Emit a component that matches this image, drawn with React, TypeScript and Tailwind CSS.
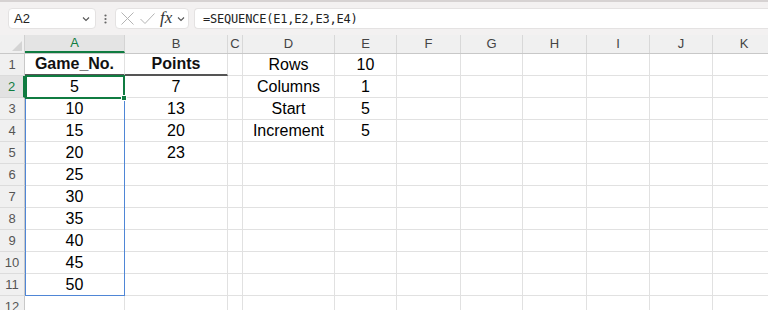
import React from 'react';

const cols = [
  { k: 'A', w: 'w-[100px]' },
  { k: 'B', w: 'w-[103px]' },
  { k: 'C', w: 'w-[15px]' },
  { k: 'D', w: 'w-[92px]' },
  { k: 'E', w: 'w-[62px]' },
  { k: 'F', w: 'w-[64px]' },
  { k: 'G', w: 'w-[62px]' },
  { k: 'H', w: 'w-[64px]' },
  { k: 'I', w: 'w-[63px]' },
  { k: 'J', w: 'w-[63px]' },
  { k: 'K', w: 'w-[63px]' },
];

const data: Record<number, Record<string, string>> = {
  1: { A: 'Game_No.', B: 'Points', D: 'Rows', E: '10' },
  2: { A: '5', B: '7', D: 'Columns', E: '1' },
  3: { A: '10', B: '13', D: 'Start', E: '5' },
  4: { A: '15', B: '20', D: 'Increment', E: '5' },
  5: { A: '20', B: '23' },
  6: { A: '25' },
  7: { A: '30' },
  8: { A: '35' },
  9: { A: '40' },
  10: { A: '45' },
  11: { A: '50' },
  12: {},
};

const Chevron = () => (
  <svg width="10" height="10" viewBox="0 0 10 10" fill="none" stroke="#555" strokeWidth="1.1">
    <path d="M2 3.5 L5 6.5 L8 3.5" />
  </svg>
);

const App: React.FC = () => {
  return (
    <div className="w-[768px] h-[310px] overflow-hidden bg-white font-['Liberation_Sans',Arial,sans-serif]">
      {/* formula bar */}
      <div className="h-[35px] bg-[#f3f1f1] border-t-2 border-[#d6d2d2] flex items-start pt-[6px] pl-[8px]">
        <div className="w-[88px] h-[21px] bg-white rounded-[4px] border border-[#e4e2e2] flex items-center justify-between pl-[5px] pr-[4px]">
          <span className="text-[13px] text-[#222]">A2</span>
          <Chevron />
        </div>
        <div className="w-[19px] h-[21px] flex items-center justify-center">
          <svg width="3" height="12" viewBox="0 0 3 12" fill="#666">
            <circle cx="1.5" cy="2.5" r="1.1" />
            <circle cx="1.5" cy="6" r="1.1" />
            <circle cx="1.5" cy="9.5" r="1.1" />
          </svg>
        </div>
        <div className="w-[74px] h-[21px] bg-white rounded-[4px] border border-[#e4e2e2] flex items-center pl-[4px] gap-[4px]">
          <svg width="15" height="15" viewBox="0 0 15 15" fill="none" stroke="#b4b4b4" strokeWidth="1">
            <path d="M1.5 1.5 L13.5 13.5 M13.5 1.5 L1.5 13.5" />
          </svg>
          <svg width="17" height="15" viewBox="0 0 17 15" fill="none" stroke="#b4b4b4" strokeWidth="1">
            <path d="M1.5 8 L6 12.5 L15.5 2.5" />
          </svg>
          <span className="text-[17px] italic text-[#333] font-['Liberation_Serif',serif] leading-none -mt-[2px]">fx</span>
          <Chevron />
        </div>
        <div className="ml-[5px] flex-1 h-[21px] bg-white rounded-l-[4px] border border-r-0 border-[#e4e2e2] flex items-center pl-[8px]">
          <span className="text-[12px] text-[#222] font-['DejaVu_Sans_Mono',monospace] tracking-[-0.2px]">=SEQUENCE(E1,E2,E3,E4)</span>
        </div>
      </div>

      {/* column headers */}
      <div className="flex h-[19px] bg-[#f0f0f0] border-b border-[#c8c8c8]">
        <div className="w-[25px] shrink-0 border-r border-[#d0d0d0] flex items-end justify-end pr-[2px] pb-[2px]">
          <svg width="10" height="10" viewBox="0 0 10 10">
            <path d="M10 0 L10 10 L0 10 Z" fill="#d4d4d4" />
          </svg>
        </div>
        {cols.map((c) => (
          <div
            key={c.k}
            className={
              c.k === 'A'
                ? `${c.w} shrink-0 border-r border-[#d4d4d4] bg-[#e4e4e4] border-b-2 border-b-[#107c41] text-[#107c41] text-[13px] flex items-center justify-center`
                : `${c.w} shrink-0 border-r border-[#d8d8d8] text-[#444] text-[13px] flex items-center justify-center`
            }
          >
            {c.k}
          </div>
        ))}
      </div>

      {/* grid */}
      <div className="relative">
        {Object.keys(data).map((rk) => {
          const r = Number(rk);
          const row = data[r];
          return (
            <div key={r} className="flex h-[22px]">
              <div
                className={
                  r === 2
                    ? 'w-[25px] shrink-0 bg-[#e2e2e2] border-r-2 border-[#107c41] border-b border-b-[#d8d8d8] text-[13px] text-[#107c41] flex items-center justify-center'
                    : 'w-[25px] shrink-0 bg-[#f0f0f0] border-r border-[#c8c8c8] border-b border-b-[#dcdcdc] text-[13px] text-[#555] flex items-center justify-center'
                }
              >
                {r}
              </div>
              {cols.map((c) => {
                const v = row[c.k];
                const head = r === 1 && (c.k === 'A' || c.k === 'B');
                return (
                  <div
                    key={c.k}
                    className={
                      head
                        ? `${c.w} shrink-0 border-r border-[#e1e1e1] border-b-2 border-b-[#555] text-[16px] font-bold text-[#111] flex items-center justify-center`
                        : `${c.w} shrink-0 border-r border-b border-[#e1e1e1] text-[16px] text-black flex items-center justify-center`
                    }
                  >
                    {v}
                  </div>
                );
              })}
            </div>
          );
        })}

        {/* spill range outline */}
        <div className="absolute left-[25px] top-[22px] w-[100px] h-[220px] border border-[#4f86d6] pointer-events-none" />
        {/* active cell */}
        <div className="absolute left-[25px] top-[21px] w-[100px] h-[24px] border-2 border-[#107c41] pointer-events-none">
          <div className="absolute right-[-4px] bottom-[-4px] w-[6px] h-[6px] bg-[#107c41] border border-white" />
        </div>
      </div>
    </div>
  );
};

export default App;
